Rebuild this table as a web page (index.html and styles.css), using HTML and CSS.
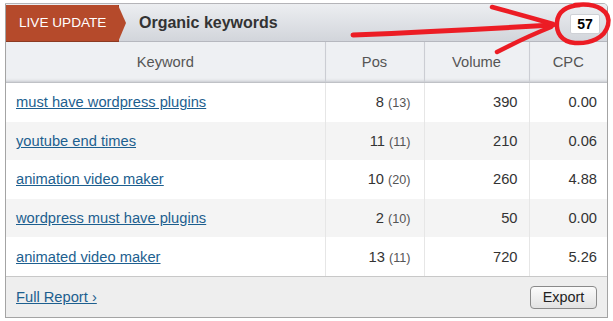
FILE: index.html
```html
<!DOCTYPE html>
<html>
<head>
<meta charset="utf-8">
<link rel="stylesheet" href="styles.css">
</head>
<body>
<div class="widget">
  <div class="head">
    <div class="tag">LIVE UPDATE</div>
    <div class="title">Organic keywords</div>
    <div class="count">57</div>
  </div>
  <table class="grid">
    <colgroup>
      <col class="c-kw"><col class="c-pos"><col class="c-vol"><col class="c-cpc">
    </colgroup>
    <thead>
      <tr><th>Keyword</th><th>Pos</th><th>Volume</th><th>CPC</th></tr>
    </thead>
    <tbody>
      <tr><td class="kw"><a href="#">must have wordpress plugins</a></td><td class="num pos">8 <span class="prev">(13)</span></td><td class="num vol">390</td><td class="num cpc">0.00</td></tr>
      <tr class="alt"><td class="kw"><a href="#">youtube end times</a></td><td class="num pos">11 <span class="prev">(11)</span></td><td class="num vol">210</td><td class="num cpc">0.06</td></tr>
      <tr><td class="kw"><a href="#">animation video maker</a></td><td class="num pos">10 <span class="prev">(20)</span></td><td class="num vol">260</td><td class="num cpc">4.88</td></tr>
      <tr class="alt"><td class="kw"><a href="#">wordpress must have plugins</a></td><td class="num pos">2 <span class="prev">(10)</span></td><td class="num vol">50</td><td class="num cpc">0.00</td></tr>
      <tr><td class="kw"><a href="#">animated video maker</a></td><td class="num pos">13 <span class="prev">(11)</span></td><td class="num vol">720</td><td class="num cpc">5.26</td></tr>
    </tbody>
  </table>
  <div class="foot">
    <a href="#" class="report">Full Report ›</a>
    <button class="export">Export</button>
  </div>
</div>
<svg class="scribble" width="613" height="321" viewBox="0 0 613 321">
  <g fill="none" stroke="#ec1c24" stroke-linecap="round">
    <path stroke-width="5" d="M353 35 Q450 31 553 25"/>
    <path stroke-width="4.5" d="M492 7 Q525 16 553 24"/>
    <path stroke-width="4.5" d="M497 52 Q526 37 551 27"/>
    <path stroke-width="4.5" d="M575 5 C598 2 611 12 608 25 C605 38 590 44 575 43 C561 42 556 32 557 22 C558 12 566 6 580 5"/>
  </g>
</svg>
</body>
</html>
```
FILE: styles.css
```css
html, body {
  margin: 0;
  padding: 0;
  background: #ffffff;
}
body {
  font-family: Arial, "Liberation Sans", sans-serif;
  font-size: 14.7px;
  color: #333;
  position: relative;
  width: 613px;
  height: 321px;
  overflow: hidden;
}
.widget {
  margin: 3px 0 0 5px;
  width: 603px;
  box-sizing: border-box;
  border: 1px solid #a4a4a4;
  border-top-color: #b4b4b8;
  border-radius: 0 5px 0 0;
  overflow: hidden;
}
.head {
  height: 37px;
  display: flex;
  align-items: center;
  background: linear-gradient(#eceef1, #d2d5db);
  border-bottom: 1px solid #b6b8bf;
  position: relative;
}
.tag {
  position: relative;
  height: 37px;
  width: 113px;
  box-sizing: border-box;
  padding-left: 13px;
  display: flex;
  align-items: center;
  background: #b54a2b;
  color: #fff;
  font-size: 13.6px;
  border-right: 1px solid #8c3a22;
  border-bottom: 1px solid #8c3a22;
  margin-bottom: -1px;
}
.tag::after {
  content: "";
  position: absolute;
  right: -8px;
  top: 0;
  width: 0;
  height: 0;
  border-top: 18px solid transparent;
  border-bottom: 19px solid transparent;
  border-left: 8px solid #b54a2b;
}
.title {
  margin-left: 20px;
  font-size: 16px;
  font-weight: bold;
  color: #333;
  flex: 1;
}
.count {
  width: 30px;
  height: 20px;
  box-sizing: border-box;
  margin-right: 7px;
  margin-top: 2px;
  background: #fff;
  border: 1px solid #cfd1d6;
  border-radius: 2px;
  font-weight: bold;
  font-size: 14px;
  color: #000;
  display: flex;
  align-items: center;
  justify-content: center;
}
.grid {
  width: 100%;
  border-collapse: collapse;
  table-layout: fixed;
}
.c-kw { width: 319px; }
.c-pos { width: 99px; }
.c-vol { width: 105px; }
.c-cpc { width: auto; }
.grid th {
  height: 40px;
  padding: 0;
  font-weight: normal;
  color: #555;
  background: #eef0f3;
  border-left: 1px solid #cbcdd3;
  border-bottom: 1px solid #bfc1c6;
  box-shadow: inset 0 -3px 3px -2px #c4c6cc;
  text-align: center;
}
.grid th:first-child { border-left: none; }
.grid td {
  height: 38.6px;
  padding: 0;
  border-left: 1px solid #e6e6e6;
  color: #333;
}
.grid td:first-child { border-left: none; }
.grid tr.alt td { background: #f4f4f4; }
.kw { padding-left: 10px !important; }
.kw a {
  color: #1d5f8f;
  text-decoration: underline;
}
.num { text-align: right; }
.pos { padding-right: 13px !important; }
.vol { padding-right: 11px !important; }
.cpc { padding-right: 10px !important; }
.prev {
  font-size: 12.6px;
  color: #555;
}
.foot {
  height: 40px;
  border-top: 1px solid #c8c8c8;
  background: #eeeeee;
  display: flex;
  align-items: center;
  justify-content: space-between;
  padding: 0 10px 0 10px;
}
.report {
  color: #1d5f8f;
  text-decoration: underline;
}
.export {
  font-family: Arial, "Liberation Sans", sans-serif;
  font-size: 14.4px;
  color: #222;
  width: 67px;
  height: 23px;
  padding: 0;
  margin-top: 1px;
  border: 1px solid #8a8a8a;
  border-radius: 4px;
  background: linear-gradient(#fbfbfb, #e2e2e2);
}
.scribble {
  position: absolute;
  left: 0;
  top: 0;
  pointer-events: none;
}
```
